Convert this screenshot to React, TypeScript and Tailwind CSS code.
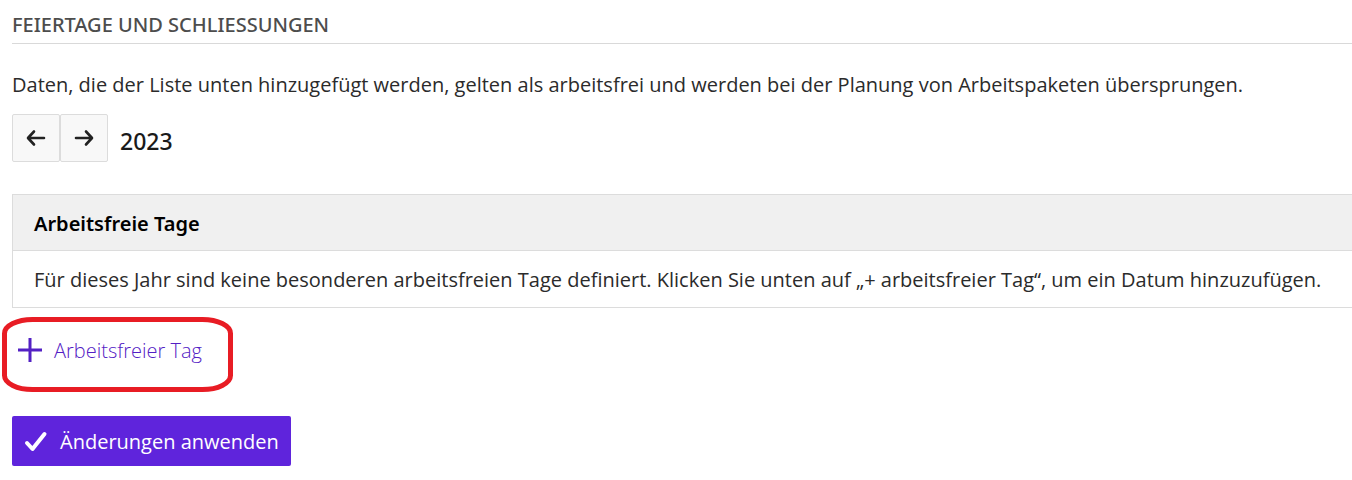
import React from "react";

function ArrowLeft() {
  return (
    <svg aria-hidden="true" className="mx-auto size-5" viewBox="0 0 20 20" fill="none" stroke="currentColor" strokeWidth="2.6" strokeLinecap="round" strokeLinejoin="round">
      <path d="M18 10H2.500M8 3.500L2 10l6 6.500" />
    </svg>
  );
}

function ArrowRight() {
  return (
    <svg aria-hidden="true" className="mx-auto size-5" viewBox="0 0 20 20" fill="none" stroke="currentColor" strokeWidth="2.6" strokeLinecap="round" strokeLinejoin="round">
      <path d="M2 10h15.500M12 3.500L18 10l-6 6.500" />
    </svg>
  );
}

export default function App() {
  return (
    <main className="bg-white pb-3.5 pl-3 font-['Open_Sans','Noto_Sans',sans-serif] text-[20px] leading-7 text-[#2b2b2b]">
      <h2 className="border-b border-[#d9d9d9] pt-[11px] pb-1 font-['Noto_Sans',sans-serif] text-[20px] font-medium text-[#4d4d4d]">
        FEIERTAGE UND SCHLIESSUNGEN
      </h2>
      <p className="mt-[27px]">
        Daten, die der Liste unten hinzugefügt werden, gelten als arbeitsfrei und werden bei der Planung von
        Arbeitspaketen übersprungen.
      </p>
      <div className="mt-[15px] flex items-center">
        <button type="button" aria-label="Vorheriges Jahr" className="size-12 rounded-xs border border-[#dcdcdc] bg-[#f8f8f8] text-[#222222]">
          <ArrowLeft />
        </button>
        <button type="button" aria-label="Nächstes Jahr" className="size-12 rounded-xs border border-[#dcdcdc] bg-[#f8f8f8] text-[#222222]">
          <ArrowRight />
        </button>
        <h3 className="ml-3 pt-1.5 font-['Noto_Sans',sans-serif] text-[23px] font-medium text-[#1a1a1a]">2023</h3>
      </div>
      <table className="mt-8 w-full border-collapse border-y border-l border-[#dcdcdc] text-left">
        <thead className="bg-[#f0f0f0]">
          <tr>
            <th className="border-b border-[#dcdcdc] pt-[15px] pb-3 pl-[21px] font-['Noto_Sans',sans-serif] font-semibold text-black">Arbeitsfreie Tage</th>
          </tr>
        </thead>
        <tbody>
          <tr>
            <td className="pt-[15px] pb-[13px] pl-[21px]">
              Für dieses Jahr sind keine besonderen arbeitsfreien Tage definiert. Klicken Sie unten auf „+ arbeitsfreier
              Tag“, um ein Datum hinzuzufügen.
            </td>
          </tr>
        </tbody>
      </table>
      <div className="relative mt-7 w-fit">
        <a href="#neu" className="flex items-center gap-3 pl-1.5 text-[#5320c4]">
          <svg aria-hidden="true" className="size-6" viewBox="0 0 24 24" fill="none" stroke="currentColor" strokeWidth="3">
            <path d="M0 12h24M12 0v24" />
          </svg>
          <span className="pt-0.5 leading-[26px] font-light">Arbeitsfreier Tag</span>
        </a>
        <svg aria-hidden="true" className="pointer-events-none absolute -top-5 -left-2.5 h-[76px] w-[232px]" viewBox="0 0 232 76" fill="none" stroke="#e81c24" strokeWidth="5">
          <rect x="2.500" y="3.500" width="226" height="70" rx="28" ry="14" />
        </svg>
      </div>
      <button type="button" className="mt-[52px] flex h-[50px] items-center gap-3 rounded-xs bg-[#5f24dc] px-3 text-white">
        <svg aria-hidden="true" className="size-6" viewBox="0 0 24 24" fill="none" stroke="currentColor" strokeWidth="4" strokeLinecap="round" strokeLinejoin="round">
          <path d="M3 14l5.500 6L20.500 5" />
        </svg>
        <span className="pt-0.5">Änderungen anwenden</span>
      </button>
    </main>
  );
}
